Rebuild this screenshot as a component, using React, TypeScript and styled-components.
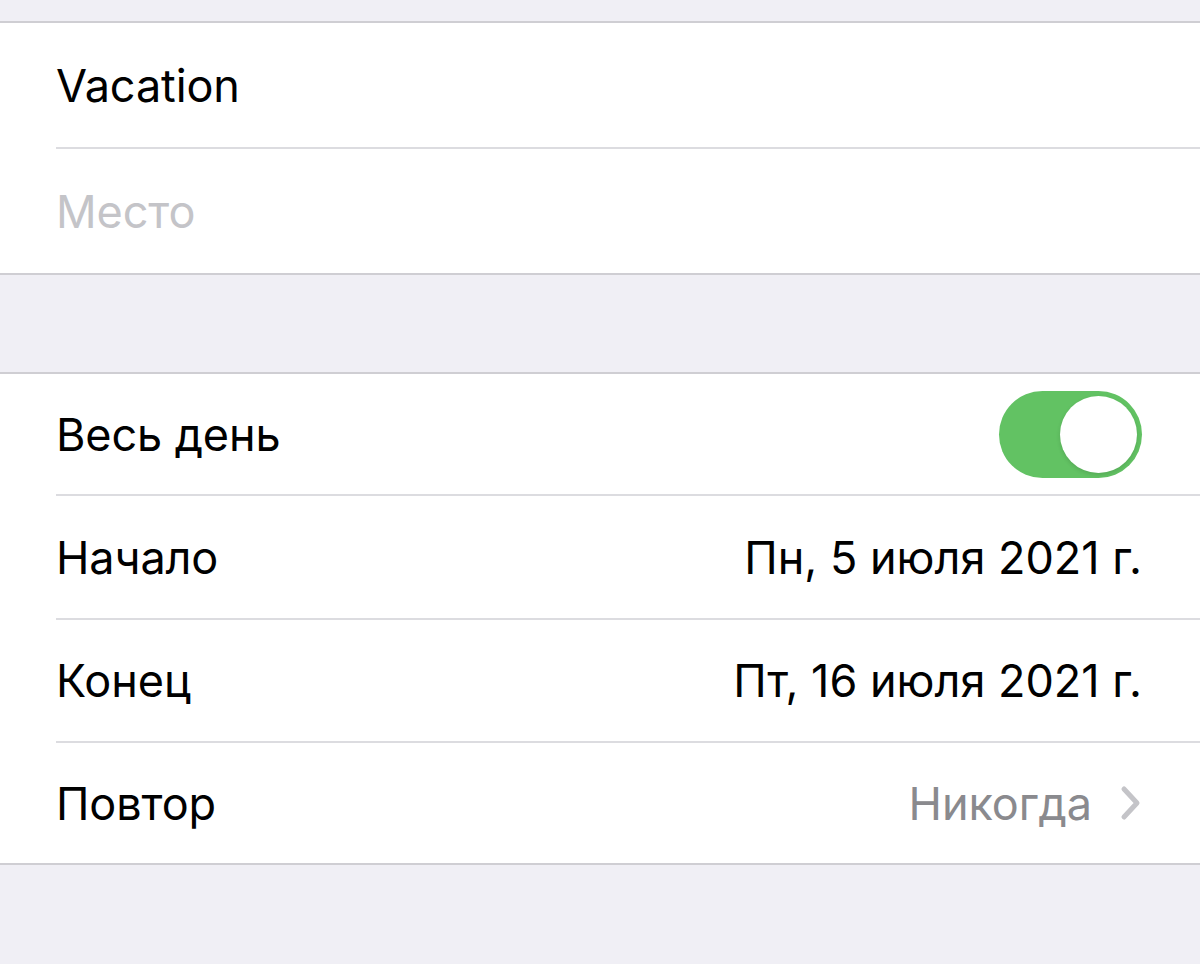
import React from "react";
import styled, { createGlobalStyle } from "styled-components";

const GlobalStyle = createGlobalStyle`
  html, body {
    margin: 0;
    padding: 0;
    background: #f0eff5;
  }
  body {
    font-family: Inter, "Noto Sans", "Liberation Sans", sans-serif;
    -webkit-font-smoothing: antialiased;
  }
`;

const Page = styled.div`
  width: 1200px;
  min-height: 964px;
  background: #f0eff5;
  padding-top: 21px;
  display: flex;
  flex-direction: column;
  gap: 97px;
`;

const Group = styled.section`
  background: #fff;
  border-top: 2px solid #cfced3;
  border-bottom: 2px solid #cfced3;
`;

const Row = styled.div<{ $h: number; $last?: boolean }>`
  height: ${(p) => p.$h}px;
  margin-left: 56px;
  padding: 0 58px 0 0;
  display: flex;
  align-items: center;
  justify-content: space-between;
  border-bottom: ${(p) => (p.$last ? "none" : "2px solid #dcdce0")};
`;

const Label = styled.span<{ $muted?: boolean }>`
  font-size: 45px;
  letter-spacing: -0.1px;
  color: ${(p) => (p.$muted ? "#c4c4c8" : "#000")};
`;

const Value = styled.span<{ $gray?: boolean }>`
  font-size: 45px;
  letter-spacing: 0px;
  color: ${(p) => (p.$gray ? "#8a8a8e" : "#000")};
  display: flex;
  align-items: center;
  gap: 28px;
`;

const Toggle = styled.div`
  width: 143px;
  height: 87px;
  border-radius: 44px;
  background: #62c263;
  display: flex;
  align-items: center;
  justify-content: flex-end;
  padding: 0 5px;
  box-sizing: border-box;
`;

const Knob = styled.div`
  width: 77px;
  height: 77px;
  border-radius: 50%;
  background: #fff;
  box-shadow: 0 2px 4px rgba(0, 0, 0, 0.12);
`;

const Chevron = () => (
  <svg width="22" height="36" viewBox="0 0 22 36">
    <path
      d="M4 4 L17 18 L4 32"
      fill="none"
      stroke="#c4c4c8"
      strokeWidth="5"
      strokeLinecap="round"
      strokeLinejoin="round"
    />
  </svg>
);

export default function App() {
  return (
    <>
      <GlobalStyle />
      <Page>
        <Group>
          <Row $h={124}>
            <Label>Vacation</Label>
          </Row>
          <Row $h={124} $last>
            <Label $muted>Место</Label>
          </Row>
        </Group>
        <Group>
          <Row $h={120}>
            <Label>Весь день</Label>
            <Toggle>
              <Knob />
            </Toggle>
          </Row>
          <Row $h={122}>
            <Label>Начало</Label>
            <Value>Пн, 5 июля 2021 г.</Value>
          </Row>
          <Row $h={121}>
            <Label>Конец</Label>
            <Value>Пт, 16 июля 2021 г.</Value>
          </Row>
          <Row $h={120} $last>
            <Label>Повтор</Label>
            <Value $gray>
              Никогда
              <Chevron />
            </Value>
          </Row>
        </Group>
      </Page>
    </>
  );
}
